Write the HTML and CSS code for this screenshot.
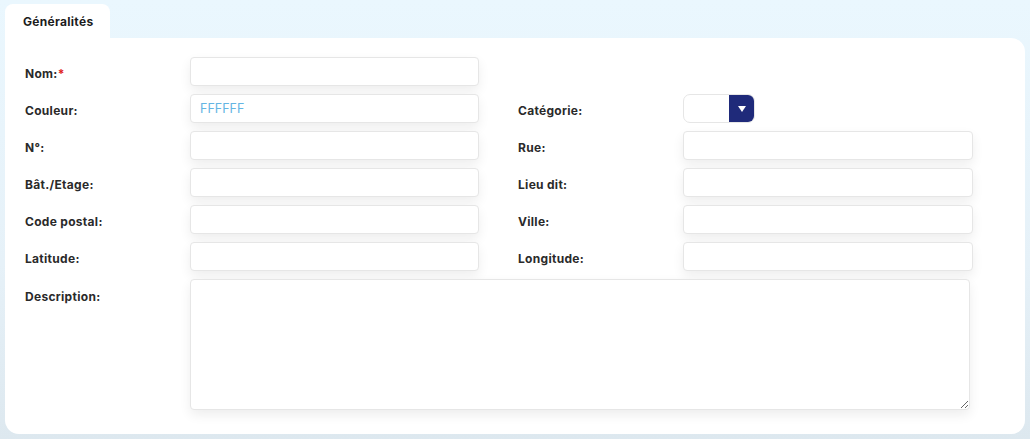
FILE: index.html
```html
<!DOCTYPE html>
<html lang="fr">
<head>
    <meta charset="UTF-8">
    <title>Généralités</title>
    <link rel="stylesheet" href="styles.css">
</head>
<body>

<div class="tabs">
    <div class="tab active">Généralités</div>
</div>

<div class="card">
    <div class="form-grid">
        <label class="lbl">Nom:<span class="req">*</span></label>
        <input class="field" type="text">

        <label class="lbl">Couleur:</label>
        <input class="field color-value" type="text" value="FFFFFF">
        <label class="lbl lbl-right">Catégorie:</label>
        <div class="select-box">
            <span class="select-value"></span>
            <span class="select-btn">
                <svg width="10" height="8" viewBox="0 0 10 8"><path d="M1 1h8L5 7z" fill="#fff"/></svg>
            </span>
        </div>

        <label class="lbl">N°:</label>
        <input class="field" type="text">
        <label class="lbl lbl-right">Rue:</label>
        <input class="field" type="text">

        <label class="lbl">Bât./Etage:</label>
        <input class="field" type="text">
        <label class="lbl lbl-right">Lieu dit:</label>
        <input class="field" type="text">

        <label class="lbl">Code postal:</label>
        <input class="field" type="text">
        <label class="lbl lbl-right">Ville:</label>
        <input class="field" type="text">

        <label class="lbl">Latitude:</label>
        <input class="field" type="text">
        <label class="lbl lbl-right">Longitude:</label>
        <input class="field" type="text">

        <label class="lbl lbl-top">Description:</label>
        <textarea class="field area"></textarea>
    </div>
</div>

</body>
</html>
```

FILE: styles.css
```css
html, body {
    height: 100%;
}
body {
    margin: 0;
    padding: 4px 5px 0 5px;
    box-sizing: border-box;
    font-family: 'Inter', 'Open Sans', sans-serif;
    color: #222;
    background: linear-gradient(180deg, #eaf7fe 0%, #e6f1f8 60%, #dde8ef 100%);
}
.tabs {
    display: flex;
}
.tab {
    width: 105px;
    height: 34px;
    box-sizing: border-box;
    padding: 0 0 0 18px;
    display: flex;
    align-items: center;
    font-size: 12px;
    font-weight: 700;
    letter-spacing: 0.3px;
    color: #1c1c1c;
    background: #fff;
    border-radius: 8px 8px 0 0;
}
.card {
    width: 1020px;
    height: 396px;
    box-sizing: border-box;
    background: #fff;
    border-radius: 0 14px 14px 14px;
    padding: 19px 20px 0 20px;
}
.form-grid {
    display: grid;
    grid-template-columns: 165px 289px 39px 165px 290px;
    grid-auto-rows: 29px;
    row-gap: 8px;
    align-items: center;
}
.lbl {
    grid-column: 1;
    font-size: 12px;
    font-weight: 700;
    letter-spacing: 0.3px;
    color: #2a2a2a;
    padding-top: 4px;
}
.lbl-right {
    grid-column: 4;
}
.req {
    color: #e02020;
}
.field {
    height: 29px;
    box-sizing: border-box;
    border: 1px solid #e6e6e6;
    border-radius: 4px;
    background: #fff;
    box-shadow: 0 5px 12px rgba(0, 0, 0, 0.07);
    padding: 0 9px;
    font-family: 'Inter', 'Open Sans', sans-serif;
    font-size: 12.5px;
    outline: none;
}
.color-value {
    color: #64b5e3;
}
.select-box {
    width: 72px;
    height: 29px;
    display: flex;
    box-sizing: border-box;
    border: 1px solid #e6e6e6;
    border-radius: 7px;
    overflow: hidden;
}
.select-value {
    flex: 1;
}
.select-btn {
    width: 25px;
    background: #1f2a7a;
    display: flex;
    align-items: center;
    justify-content: center;
}
.lbl-top {
    align-self: start;
    padding-top: 10px;
}
.area {
    grid-column: 2 / 6;
    width: 780px;
    height: 131px;
    grid-row: span 4;
    align-self: start;
    resize: vertical;
    padding: 8px;
}
```
